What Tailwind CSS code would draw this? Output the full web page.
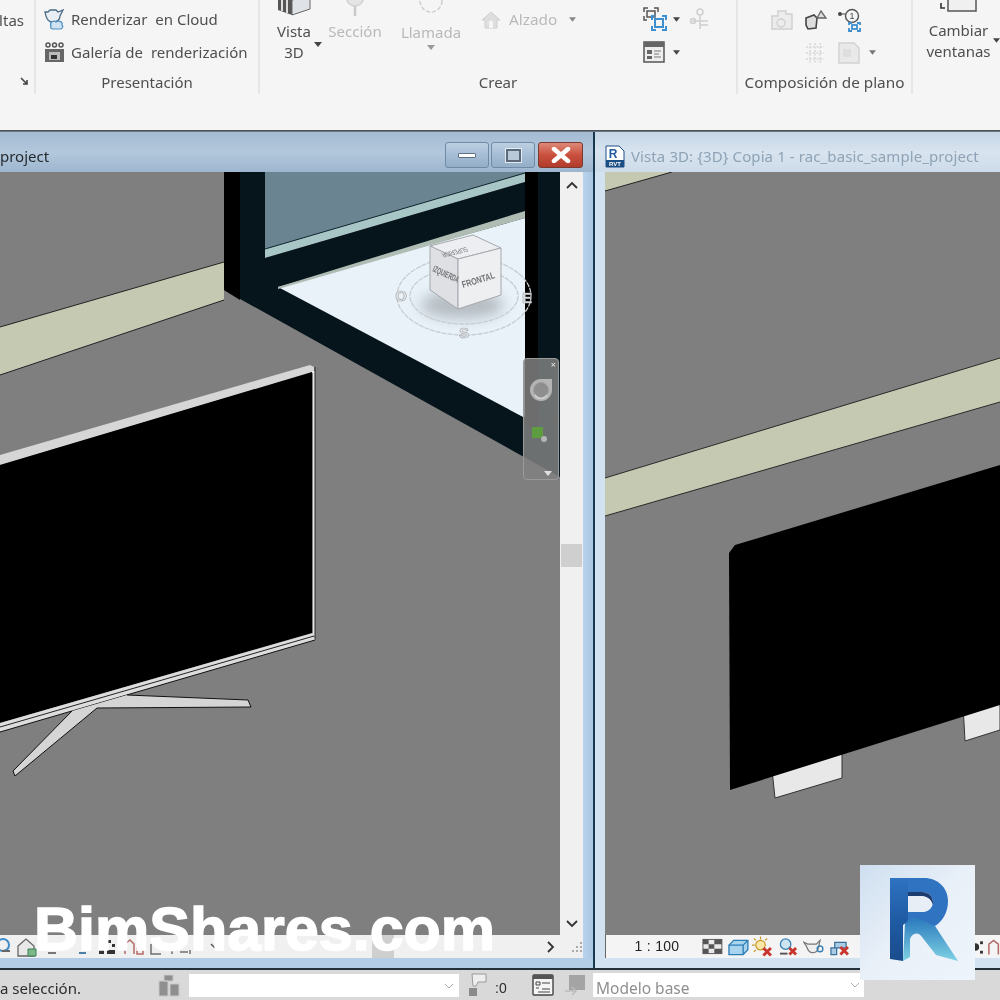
<!DOCTYPE html>
<html lang="es">
<head>
<meta charset="utf-8">
<title>Revit</title>
<script src="https://cdn.jsdelivr.net/npm/@tailwindcss/browser@4"></script>
</head>
<body class="m-0 overflow-hidden">
<div class="relative w-[1000px] h-[1000px] overflow-hidden bg-[#f5f5f5] font-['Noto_Sans',sans-serif] text-[#4f4f4f] blur-[0.35px]">

  <!-- RIBBON -->
  <header class="h-[130px] flex items-start bg-[#f5f5f5] overflow-hidden">
    <section class="w-[36px] h-[94px] border-r-2 border-[#e6e6e6] flex flex-col items-end pr-[10px]">
      <div class="h-[71px] pt-[8px] text-[15px] leading-[24px] overflow-hidden">ltas</div>
      <svg class="w-[9px] h-[9px] mr-[-5px] mt-[6px]" viewBox="0 0 9 9"><path d="M1 1l6 6M7 3v4H3" fill="none" stroke="#444" stroke-width="1.600"/></svg>
    </section>

    <section class="w-[224px] h-[94px] border-r-2 border-[#e6e6e6] flex flex-col">
      <div class="h-[71px] pt-[3px] pl-[7px] flex flex-col text-[15px]">
        <div class="h-[33px] flex items-center gap-[5px]">
          <svg class="w-[23px] h-[23px] shrink-0" viewBox="0 0 23 23"><path d="M2 4h3l2-2h6l2 2 5-2-3 6c0 4-3 6-8 6-4 0-6-4-7-10z" fill="#e8eef3" stroke="#4a6a85" stroke-width="1.300"/><path d="M8 18c-2-4 3-6 5-4 3-2 7 0 6 3 2 2 0 4-2 4H10c-2 0-3-2-2-3z" fill="#cfe3f3" stroke="#4f8fc0" stroke-width="1.200"/></svg>
          <span>Renderizar&nbsp; en Cloud</span>
        </div>
        <div class="h-[33px] flex items-center gap-[5px]">
          <svg class="w-[23px] h-[23px] shrink-0" viewBox="0 0 23 23"><g fill="none" stroke="#555" stroke-width="1.500"><circle cx="5" cy="4" r="2"/><circle cx="11.500" cy="4" r="2"/><circle cx="18" cy="4" r="2"/></g><rect x="2" y="8" width="19" height="13" fill="#666"/><rect x="6" y="11" width="11" height="8" fill="#bbb"/><rect x="8" y="14" width="6" height="4" fill="#333"/></svg>
          <span class="tracking-[0.03px]">Galería de&nbsp; renderización</span>
        </div>
      </div>
      <div class="h-[22px] text-center text-[15px] leading-[22px]">Presentación</div>
    </section>

    <section class="w-[478px] h-[94px] border-r-2 border-[#e6e6e6] flex flex-col">
      <div class="h-[71px] flex items-start pl-[12px]">
        <div class="w-[44px] flex flex-col items-center text-[15px] leading-[21px]">
          <svg class="w-[36px] h-[16px] shrink-0 mb-[5px]" viewBox="0 0 36 16"><path d="M2 -4v14l14 5 18-6V-4z" fill="#eee"/><path d="M2 -4v14l14 5V0z" fill="#555"/><path d="M16 0v15l18-6V-4z" fill="#dfe3e8" stroke="#666"/><path d="M6 -2v13M11 0v13" stroke="#ddd" stroke-width="2"/></svg>
          <span>Vista</span><span>3D</span>
        </div>
        <svg class="w-[8px] h-[5px] mt-[42px] ml-[-2px]" viewBox="0 0 8 5"><path d="M0 0h8L4 5z" fill="#444"/></svg>
        <div class="w-[58px] ml-[4px] flex flex-col items-center text-[15px] leading-[21px] text-[#b9b9b9]">
          <svg class="w-[24px] h-[16px] shrink-0 mb-[5px]" viewBox="0 0 24 16"><path d="M3 -5c0 8 5 11 9 11s9-3 9-11" fill="#e4e4e4" stroke="#d2d2d2" stroke-width="1.500"/><path d="M12 6v10" stroke="#c9c9c9" stroke-width="2.500"/></svg>
          <span>Sección</span>
        </div>
        <div class="w-[94px] flex flex-col items-center text-[15px] leading-[21px] text-[#b9b9b9]">
          <svg class="w-[24px] h-[16px] shrink-0 mb-[6px]" viewBox="0 0 24 16"><circle cx="12" cy="1" r="11" fill="none" stroke="#cfcfcf" stroke-width="1.500" stroke-dasharray="4 2"/></svg>
          <span>Llamada</span>
          <svg class="w-[8px] h-[5px] mt-[2px]" viewBox="0 0 8 5"><path d="M0 0h8L4 5z" fill="#999"/></svg>
        </div>
        <div class="flex items-center h-[39px] ml-[3px] text-[15px] text-[#b9b9b9]">
          <svg class="w-[20px] h-[18px] shrink-0" viewBox="0 0 20 18"><path d="M10 1L1 9h3v8h12V9h3z" fill="#dedede" stroke="#cfcfcf"/><rect x="8" y="10" width="4" height="7" fill="#f5f5f5"/></svg>
          <span class="ml-[8px] text-[15.300px]">Alzado</span>
          <svg class="w-[7px] h-[5px] ml-[12px]" viewBox="0 0 8 5"><path d="M0 0h8L4 5z" fill="#888"/></svg>
        </div>
        <div class="ml-[67px] pt-[8px] flex flex-col gap-[11px]">
          <div class="flex items-center h-[22px]">
            <svg class="w-[24px] h-[24px]" viewBox="0 0 24 24"><g fill="none" stroke="#555" stroke-width="1.500"><path d="M1 5V1h4M11 1h4v4M1 9v4h3"/><rect x="4" y="4" width="8" height="6"/></g><g fill="none" stroke="#3d8fd0" stroke-width="2"><path d="M9 13v-4h3M19 9h4v4M9 19v4h4M19 23h4v-4"/><rect x="12" y="12" width="8" height="8"/></g></svg>
            <svg class="w-[7px] h-[5px] ml-[6px]" viewBox="0 0 8 5"><path d="M0 0h8L4 5z" fill="#444"/></svg>
            <svg class="w-[22px] h-[24px] ml-[9px]" viewBox="0 0 22 24"><g fill="none" stroke="#d0d0d0" stroke-width="1.600"><circle cx="11" cy="5" r="3"/><path d="M11 8v14M3 14h16"/><circle cx="4" cy="14" r="2.500"/><path d="M11 18h8"/></g></svg>
          </div>
          <div class="flex items-center h-[22px]">
            <svg class="w-[22px] h-[22px]" viewBox="0 0 22 22"><rect x="1" y="1" width="20" height="20" fill="#eee" stroke="#555" stroke-width="1.500"/><rect x="1" y="1" width="20" height="5" fill="#666"/><path d="M4 9h5v4H4zM4 15h5v3H4z" fill="#666"/><path d="M11 10h7M11 13h5M11 16h7" stroke="#777"/></svg>
            <svg class="w-[7px] h-[5px] ml-[8px]" viewBox="0 0 8 5"><path d="M0 0h8L4 5z" fill="#444"/></svg>
          </div>
        </div>
      </div>
      <div class="h-[22px] text-center text-[15px] leading-[22px]">Crear</div>
    </section>

    <section class="w-[175px] h-[94px] border-r-2 border-[#e6e6e6] flex flex-col">
      <div class="h-[71px] pt-[8px] pl-[33px] flex flex-col gap-[10px]">
        <div class="flex items-center gap-[11px] h-[23px]">
          <svg class="w-[22px] h-[22px]" viewBox="0 0 22 22"><path d="M1 7h6V2h8v3h6v15H1z" fill="#ececec" stroke="#cfcfcf" stroke-width="1.400"/><circle cx="10" cy="14" r="4" fill="none" stroke="#d0d0d0" stroke-width="1.400"/></svg>
          <svg class="w-[24px] h-[22px]" viewBox="0 0 24 22"><path d="M2 9l8-3 3 3-1 10-8 1-2-4z" fill="#ddd" stroke="#444" stroke-width="1.600"/><path d="M13 9l4-7 5 7z" fill="#ddd" stroke="#666" stroke-width="1.300"/></svg>
          <svg class="w-[24px] h-[24px] ml-[-1px]" viewBox="0 0 24 24"><circle cx="2" cy="6" r="2" fill="#444"/><path d="M4 6h4" stroke="#444"/><circle cx="14" cy="8" r="6.500" fill="none" stroke="#555" stroke-width="1.400"/><text x="14" y="11" font-size="9" text-anchor="middle" fill="#444" font-family="Liberation Sans">1</text><g fill="none" stroke="#3d8fd0" stroke-width="1.800"><path d="M11 17v-2h3M19 15h3v2M11 20v3h3M19 23h3v-3"/><rect x="14" y="17" width="5" height="4"/></g></svg>
        </div>
        <div class="flex items-center h-[23px] pl-[34px]">
          <svg class="w-[20px] h-[22px]" viewBox="0 0 20 22"><g stroke="#d6d6d6" stroke-width="1.400" stroke-dasharray="2 1.500"><path d="M1 5h18M1 11h18M1 17h18M5 1v20M10 1v20M15 1v20"/></g></svg>
          <svg class="w-[22px] h-[22px] ml-[13px]" viewBox="0 0 22 22"><path d="M1 1h15l5 5v15H1z" fill="#e9e9e9" stroke="#d2d2d2" stroke-width="1.400"/><path d="M5 7h8v8H5z" fill="#dedede"/></svg>
          <svg class="w-[7px] h-[5px] ml-[9px]" viewBox="0 0 8 5"><path d="M0 0h8L4 5z" fill="#777"/></svg>
        </div>
      </div>
      <div class="h-[22px] text-center text-[15.300px] leading-[22px]">Composición de plano</div>
    </section>

    <section class="flex-1 h-[94px] relative flex flex-col items-center pl-[4px] text-[15px] leading-[21px]">
      <svg class="w-[40px] h-[13px] shrink-0 mb-[7px]" viewBox="0 0 40 13"><path d="M9 -4v15h28V-4" fill="#f0f0f0" stroke="#555" stroke-width="1.500"/><path d="M2 3v5h4" fill="none" stroke="#333" stroke-width="1.600"/></svg>
      <span>Cambiar</span>
      <span>ventanas</span>
      <svg class="absolute left-[80px] top-[38px] w-[7px] h-[5px]" viewBox="0 0 8 5"><path d="M0 0h8L4 5z" fill="#444"/></svg>
    </section>
  </header>

  <div class="h-[2px] bg-gradient-to-b from-[#3b4045] to-[#7d8892]"></div>

  <!-- WINDOWS -->
  <main class="h-[836px] flex">
    <!-- left window -->
    <div class="w-[593px] flex flex-col bg-[#b3cde6]">
      <div class="h-[40px] flex items-center bg-gradient-to-b from-[#a4bbd4] via-[#b3c8dc] to-[#9db6cf]">
        <span class="text-[15px] text-[#252b30] leading-[48px] mt-[8px]">project</span>
        <div class="ml-auto mr-[10px] flex gap-[2px] items-start mt-[10px] mb-[4px]">
          <div class="w-[44px] h-[26px] rounded-[3px] border border-[#6f8aa5] bg-gradient-to-b from-[#bdd0e2] via-[#a5bdd5] to-[#94aec8] flex items-center justify-center"><div class="w-[18px] h-[5px] bg-white border border-[#5d6f82] rounded-[1px]"></div></div>
          <div class="w-[44px] h-[26px] rounded-[3px] border border-[#6f8aa5] bg-gradient-to-b from-[#bdd0e2] via-[#a5bdd5] to-[#94aec8] flex items-center justify-center"><div class="w-[15px] h-[13px] border-2 border-[#5b6978] bg-[#b9c9d8] outline outline-white/70"></div></div>
          <div class="w-[45px] h-[26px] ml-[1px] rounded-[3px] border border-[#7b3a30] bg-gradient-to-b from-[#dd8878] via-[#c9503d] to-[#b13b2b] flex items-center justify-center">
            <svg class="w-[20px] h-[16px]" viewBox="0 0 20 16"><path d="M3 2l14 12M17 2L3 14" stroke="#fff" stroke-width="4.500" stroke-linecap="round"/></svg>
          </div>
        </div>
      </div>
      <div class="h-[786px] flex">
        <div class="w-[583px] flex flex-col">
          <div class="h-[763px] flex">
            <!-- left scene -->
            <div class="relative w-[560px] h-[763px] bg-[#7f7f7f]">
              <svg class="block w-[560px] h-[763px]" viewBox="0 172 560 763">
                <defs><filter id="soft" x="-30%" y="-60%" width="160%" height="220%"><feGaussianBlur stdDeviation="7"/></filter></defs>
                <path d="M0 327L224 262V300L0 375z" fill="#c6c9b2"/>
                <path d="M0 327L224 262M0 375L224 300" stroke="#222" stroke-width="1" fill="none"/>
                <path d="M265 172H525V176L265 249z" fill="#6a8492"/>
                <path d="M265 249L525 173V182L265 258z" fill="#a9c6c6"/>
                <path d="M224 172H265V258L525 182V172H560V477L224 290z" fill="#06141c"/>
                <path d="M224 172H240V300L224 290z" fill="#000"/>
                <path d="M525 172H538V440L525 420z" fill="#000"/>
                <path d="M278 287L525 218V418z" fill="#e9f2f9"/>
                <path d="M278 287L525 211V218L278 289z" fill="#aebcb3"/>
                <path d="M265 249L525 173" stroke="#10232c" stroke-width="1"/>
                <!-- view cube -->
                <ellipse cx="462" cy="305" rx="42" ry="14" fill="#a4abb1" opacity=".75" filter="url(#soft)"/>
                <g fill="none" stroke="#c8ccd0" stroke-width="1.300" stroke-dasharray="5 1">
                  <ellipse cx="464" cy="296" rx="67" ry="39"/>
                  <ellipse cx="464" cy="296" rx="54" ry="28"/>
                </g>
                <path d="M430 246L473 235L501 248L458 259z" fill="#eceef1" stroke="#a5a8ac"/>
                <path d="M430 246L458 259V309L430 290z" fill="#dfe0e3" stroke="#a5a8ac"/>
                <path d="M458 259L501 248V295L458 309z" fill="#eeeff1" stroke="#a5a8ac"/>
                <text transform="translate(466 247) rotate(-14) skewX(20) scale(-1 -1)" font-size="7" fill="#777" text-anchor="start" font-family="Liberation Sans" textLength="26" lengthAdjust="spacingAndGlyphs">SUPERIOR</text>
                <text transform="translate(432 271) rotate(25)" font-size="9" fill="#6f7275" font-family="Liberation Sans" font-weight="700" textLength="28" lengthAdjust="spacingAndGlyphs">IZQUIERDA</text>
                <text transform="translate(463 288) rotate(-17)" font-size="9.500" fill="#6f7275" font-family="Liberation Sans" font-weight="700" textLength="34" lengthAdjust="spacingAndGlyphs">FRONTAL</text>
                <g font-family="Liberation Sans" font-weight="700" font-size="15" fill="#e6e8ea" stroke="#a8abae" stroke-width=".7" text-anchor="middle">
                  <text x="401" y="301">O</text><text x="527" y="303">E</text><text x="464" y="338">S</text>
                </g>
                <!-- TV -->
                <path d="M0 455L310 365L314 367V372L0 465z" fill="#d6d6d6"/>
                <path d="M0 465L312 372V633L0 723z" fill="#000"/>
                <path d="M312 372H314V636" stroke="#e8e8e8" stroke-width="2" fill="none"/>
                <path d="M315 367V640" stroke="#2a2a2a"/>
                <path d="M0 723L313 633L315 640L0 732z" fill="#ddd"/>
                <path d="M0 727L314 636" stroke="#222"/>
                <path d="M0 732L315 640" stroke="#111"/>
                <path d="M127 695L248 700L251 707L97 708L15 776L13 771L72 711L0 732z" fill="#d5d5d5"/>
                <path d="M127 695L248 700L251 707L97 708L15 776L13 771L72 711" fill="none" stroke="#111"/>
              </svg>
              <!-- nav bar overlay -->
              <div class="absolute left-[523px] top-[186px] w-[36px] h-[122px] rounded-[4px] bg-[#808080]/85 border border-[#9a9a9a] flex flex-col items-center">
                <div class="self-end mr-[2px] mt-[1px] text-[9px] leading-[10px] text-[#e8e8e8]">×</div>
                <svg class="w-[24px] h-[24px] mt-[8px]" viewBox="0 0 24 24"><path d="M12 1h11v11a11 11 0 1 1-11-11z" fill="#b4b4b4"/><circle cx="12" cy="12" r="7.500" fill="#8e8e8e" stroke="#a0a0a0"/><path d="M6 17a7 7 0 0 0 12 0" fill="none" stroke="#d0d0d0" stroke-width="1.500"/></svg>
                <div class="w-[34px] h-px bg-[#6e6e6e] mt-[15px]"></div>
                <svg class="w-[18px] h-[18px] mt-[8px] ml-[-2px]" viewBox="0 0 18 18"><rect x="1" y="1" width="11" height="11" fill="#5d9c3f"/><circle cx="13" cy="13" r="3" fill="#b5b5b5"/></svg>
                <svg class="w-[8px] h-[7px] mt-auto mb-[2px] ml-[14px]" viewBox="0 0 8 7"><path d="M0 1h8L4 6z" fill="#e0e0e0"/></svg>
              </div>
            </div>
            <!-- v scrollbar -->
            <div class="w-[23px] h-[763px] bg-[#f0f0f0] flex flex-col items-center">
              <svg class="w-[12px] h-[8px] mt-[9px]" viewBox="0 0 12 8"><path d="M1 7l5-5 5 5" fill="none" stroke="#333" stroke-width="1.800"/></svg>
              <div class="w-[21px] h-[23px] mt-[355px] bg-[#cfcfcf]"></div>
              <svg class="w-[12px] h-[8px] mt-auto mb-[7px]" viewBox="0 0 12 8"><path d="M1 1l5 5 5-5" fill="none" stroke="#333" stroke-width="1.800"/></svg>
            </div>
          </div>
          <!-- h scrollbar -->
          <div class="h-[23px] bg-[#f0f0f0] flex items-center">
            <svg class="w-[11px] h-[18px]" viewBox="0 0 11 18"><circle cx="3" cy="7" r="6" fill="none" stroke="#3f8cc8" stroke-width="2"/><path d="M2 13h8" stroke="#666" stroke-width="2"/></svg>
            <svg class="w-[20px] h-[20px] ml-[6px]" viewBox="0 0 20 20"><path d="M1 9L9 2l8 7v10H1z" fill="#e8e8e8" stroke="#666" stroke-width="1.300"/><path d="M11 12h8v7h-8z" fill="#7cb88a" stroke="#3c7f55"/></svg>
            <div class="w-[8px] h-[10px] ml-[11px] mt-[4px] border-b-2 border-[#777]"></div>
            <div class="w-[7px] h-[10px] ml-[23px] mt-[4px] border-b-2 border-[#4d7ea8]"></div>
            <svg class="w-[20px] h-[18px] ml-[12px]" viewBox="0 0 20 18"><g fill="#333"><rect x="10" y="2" width="3" height="3"/><rect x="14" y="6" width="3" height="3"/><rect x="1" y="12" width="5" height="4"/><rect x="9" y="12" width="8" height="4"/></g></svg>
            <svg class="w-[22px] h-[18px] ml-[5px]" viewBox="0 0 22 18"><path d="M2 16V6l5-4 4 4v10M14 16h6V10h-6z" fill="none" stroke="#b46a66" stroke-width="1.500"/></svg>
            <svg class="w-[45px] h-[18px] ml-[5px]" viewBox="0 0 45 18"><path d="M1 6v10h10M14 10h8v6M30 14h8M40 12v4" fill="none" stroke="#6f6f6f" stroke-width="1.500"/></svg>
            <svg class="w-[7px] h-[7px] ml-[15px]" viewBox="0 0 7 7"><path d="M1 1l5 5" stroke="#555" stroke-width="1.400"/></svg>
            <div class="w-[22px] h-[23px] ml-[155px] bg-[#cfcfcf]"></div>
            <svg class="w-[8px] h-[12px] ml-[153px]" viewBox="0 0 8 12"><path d="M1 1l5 5-5 5" fill="none" stroke="#333" stroke-width="1.800"/></svg>
            <svg class="w-[12px] h-[12px] ml-[16px]" viewBox="0 0 12 12"><g fill="#aaa"><rect x="9" y="1" width="2" height="2"/><rect x="5" y="5" width="2" height="2"/><rect x="9" y="5" width="2" height="2"/><rect x="1" y="9" width="2" height="2"/><rect x="5" y="9" width="2" height="2"/><rect x="9" y="9" width="2" height="2"/></g></svg>
          </div>
        </div>
        <div class="w-[10px] bg-gradient-to-r from-[#b9d3ec] to-[#a9c6e2]"></div>
      </div>
    </div>

    <div class="w-[2px] bg-[#17384d]"></div>

    <!-- right window -->
    <div class="flex-1 flex flex-col bg-[#d2e2f1] relative">
      <div class="h-[40px] flex items-center pl-[10px] bg-gradient-to-b from-[#c5d6e6] via-[#d8e4ef] to-[#cddcea]">
        <svg class="w-[20px] h-[23px] mt-[9px] shrink-0" viewBox="0 0 20 23"><path d="M1 1h13l5 5v16H1z" fill="#fff" stroke="#1d4f8a"/><rect x="1" y="15" width="18" height="7" fill="#1c4e86"/><text x="8" y="13" font-size="12" font-weight="700" text-anchor="middle" fill="#1d5a9c" font-family="Liberation Sans">R</text><text x="10" y="21" font-size="6" font-weight="700" text-anchor="middle" fill="#fff" font-family="Liberation Sans">RVT</text></svg>
        <span class="ml-[6px] mt-[9px] text-[15px] tracking-[0.1px] text-[#8fa3b6] whitespace-nowrap">Vista 3D: {3D} Copia 1 - rac_basic_sample_project</span>
      </div>
      <div class="flex-1 pl-[10px]">
        <div class="w-[395px] h-[763px] bg-[#7f7f7f]">
          <svg class="block w-[395px] h-[763px]" viewBox="605 172 395 763">
            <path d="M605 172H672L605 191z" fill="#c6c9b2"/>
            <path d="M605 191L672 172" stroke="#222"/>
            <path d="M605 478L1000 358V402L605 516z" fill="#c6c9b2"/>
            <path d="M605 478L1000 358M605 516L1000 402" stroke="#2a2a2a" fill="none"/>
            <path d="M772 770L842 750V778L775 798z" fill="#e8e8e8" stroke="#333"/>
            <path d="M963 705L1000 695V730L965 741z" fill="#e8e8e8" stroke="#333"/>
            <path d="M735 545L1000 465V705L730 790L729 553z" fill="#000"/>
          </svg>
        </div>
        <div class="w-[395px] h-[23px] bg-[#f4f4f4] border-l border-[#666] flex items-center text-[#222]">
          <span class="w-[101px] pl-[6px] text-center text-[14px] tracking-[0.3px] font-['Liberation_Sans',sans-serif]">1 : 100</span>
          <svg class="w-[22px] h-[17px]" viewBox="0 0 22 17"><rect x="1" y="1" width="20" height="15" fill="#e8e8e8" stroke="#555"/><path d="M1 1h6v5H1zM13 1h8v5h-8zM7 6h6v5H7zM1 11h6v5H1zM13 11h8v5h-8z" fill="#555"/></svg>
          <svg class="w-[22px] h-[20px] ml-[5px]" viewBox="0 0 22 20"><path d="M1 8l5-5h15v10l-5 5H1z" fill="#a8d4ee" stroke="#2b7db5" stroke-width="1.400"/><path d="M1 8h15v10M16 8l5-5" fill="none" stroke="#2b7db5" stroke-width="1.400"/></svg>
          <svg class="w-[22px] h-[22px] ml-[3px]" viewBox="0 0 22 22"><circle cx="9" cy="9" r="5" fill="#fbe7a8" stroke="#c99b2a" stroke-width="1.300"/><path d="M9 0v3M0 9h3M2 2l2 2M16 2l-2 2M2 16l2-2" stroke="#c99b2a" stroke-width="1.300"/><path d="M12 12l8 8M20 12l-8 8" stroke="#c7352d" stroke-width="3"/></svg>
          <svg class="w-[20px] h-[20px] ml-[7px]" viewBox="0 0 20 20"><circle cx="7" cy="7" r="5.500" fill="#cfe4f3" stroke="#3b82b5" stroke-width="1.400"/><path d="M1 17h8" stroke="#555" stroke-width="2"/><path d="M11 11l7 7M18 11l-7 7" stroke="#c7352d" stroke-width="3"/></svg>
          <svg class="w-[22px] h-[20px] ml-[5px]" viewBox="0 0 22 20"><path d="M1 5l4 2h9l4-4-2 9c-1 3-3 4-6 4s-5-3-6-6z" fill="#eee" stroke="#777" stroke-width="1.300"/><circle cx="18" cy="12" r="3" fill="none" stroke="#3b82b5" stroke-width="1.500"/></svg>
          <svg class="w-[22px] h-[20px] ml-[6px]" viewBox="0 0 22 20"><path d="M5 5h12v6H5zM1 11h6v7H1z" fill="#a9cde6" stroke="#3b6f9a" stroke-width="1.300"/><path d="M11 10l8 8M19 10l-8 8" stroke="#c7352d" stroke-width="3"/></svg>
          <svg class="w-[24px] h-[18px] ml-[113px]" viewBox="0 0 24 18"><g fill="#333"><rect x="3" y="3" width="3" height="3"/><rect x="17" y="3" width="3" height="3"/><rect x="3" y="13" width="3" height="3"/><rect x="17" y="13" width="3" height="3"/><circle cx="12" cy="9" r="4"/></g></svg>
          <svg class="w-[14px] h-[18px]" viewBox="0 0 14 18"><path d="M2 17V6l5-4 5 4v11" fill="none" stroke="#b46a66" stroke-width="1.600"/></svg>
        </div>
      </div>
      <div class="h-[10px]"></div>
    </div>
  </main>

  <div class="h-[2px] bg-[#22303a]"></div>

  <!-- STATUS BAR -->
  <footer class="h-[30px] bg-[#d9d9d9] flex items-center text-[15px] text-[#2c2c2c]">
    <span class="w-[158px] shrink-0 mt-[6px]">a selección.</span>
    <svg class="w-[22px] h-[24px] shrink-0" viewBox="0 0 22 24"><path d="M1 8h9v15H1zM12 11h9v12h-9zM6 2h9v6H6z" fill="#8f8f8f" stroke="#c8c8c8"/></svg>
    <div class="ml-[9px] w-[270px] h-[23px] bg-white flex items-center justify-end pr-[5px] shrink-0 mt-[1px]">
      <svg class="w-[10px] h-[6px]" viewBox="0 0 10 6"><path d="M1 1l4 4 4-4" fill="none" stroke="#a8a8a8"/></svg>
    </div>
    <svg class="w-[20px] h-[24px] ml-[9px] shrink-0" viewBox="0 0 20 24"><path d="M4 1h14v8H10l-2 4H5z" fill="#eee" stroke="#9a9a9a"/><rect x="1" y="15" width="8" height="8" fill="#8a8a8a"/></svg>
    <span class="w-[39px] ml-[-2px] pl-[9px] mt-[6px] shrink-0 text-[14px] font-['Liberation_Sans',sans-serif]">:0</span>
    <svg class="w-[22px] h-[22px] ml-[7px] shrink-0" viewBox="0 0 22 22"><rect x="1" y="1" width="20" height="20" rx="1" fill="#f5f5f5" stroke="#444" stroke-width="1.400"/><rect x="1" y="1" width="20" height="4" fill="#555"/><path d="M4 8h4v3H4zM10 9h8M4 14h3M10 15h8M6 18h12" stroke="#444" fill="none"/></svg>
    <svg class="w-[22px] h-[22px] ml-[10px] shrink-0" viewBox="0 0 22 22"><path d="M5 1h16v15H5z" fill="#a4a4a4"/><path d="M1 17h10M8 13l4 4-4 4" fill="none" stroke="#bcbcbc" stroke-width="1.500"/></svg>
    <div class="ml-[7px] w-[271px] h-[24px] bg-white flex items-center justify-between pl-[3px] pr-[4px] shrink-0 text-[#8f8f8f]">
      <span class="text-[15.500px] leading-[24px] mt-[5px]">Modelo base</span>
      <svg class="w-[10px] h-[6px]" viewBox="0 0 10 6"><path d="M1 1l4 4 4-4" fill="none" stroke="#b0b0b0"/></svg>
    </div>
  </footer>

  <!-- WATERMARK -->
  <div class="absolute left-[34px] top-[894px] text-[61px] leading-[70px] font-bold text-white whitespace-nowrap font-['Liberation_Sans',sans-serif] [-webkit-text-stroke:1.500px_white]">BimShares.com</div>

  <!-- LOGO -->
  <div class="absolute left-[860px] top-[865px] w-[115px] h-[115px] bg-gradient-to-br from-[#cfdff0] via-[#e9f0f8] to-[#eef4fb]">
    <svg class="block w-[115px] h-[115px]" viewBox="0 0 115 115">
      <defs>
        <linearGradient id="leg" x1="0" y1="0" x2="0" y2="1"><stop offset="0" stop-color="#2a79bd"/><stop offset="1" stop-color="#7fd2e4"/></linearGradient>
        <linearGradient id="stem" x1="0" y1="0" x2="0" y2="1"><stop offset="0" stop-color="#2f73c1"/><stop offset=".5" stop-color="#1f5ba4"/><stop offset="1" stop-color="#1a4c8c"/></linearGradient>
      </defs>
      <path d="M45 58C52 50 66 52 75 61L98 96L76 90L62 72C58 66 52 68 50 74V92L43 96z" fill="url(#leg)"/>
      <path fill-rule="evenodd" d="M30 13H64C78 13 88 23 88 36C88 47 83 56 75 61L64 56C58 52 50 53 45 58H30zM48 28V47H62C68 47 73 43 73 37C73 31 68 27 62 27z" fill="#2f73c1"/>
      <path d="M48 27H62C69 27 74 32 73 40C71 33 66 31 60 31H52L48 47z" fill="#1c3d70"/>
      <path d="M48 31L52 31H60C66 31 71 34 72 40C71 44 67 47 62 47H48z" fill="#e7eef6"/>
      <path d="M30 13H48V56L43 60V96L30 94z" fill="url(#stem)"/>
    </svg>
  </div>
</div>
</body>
</html>
